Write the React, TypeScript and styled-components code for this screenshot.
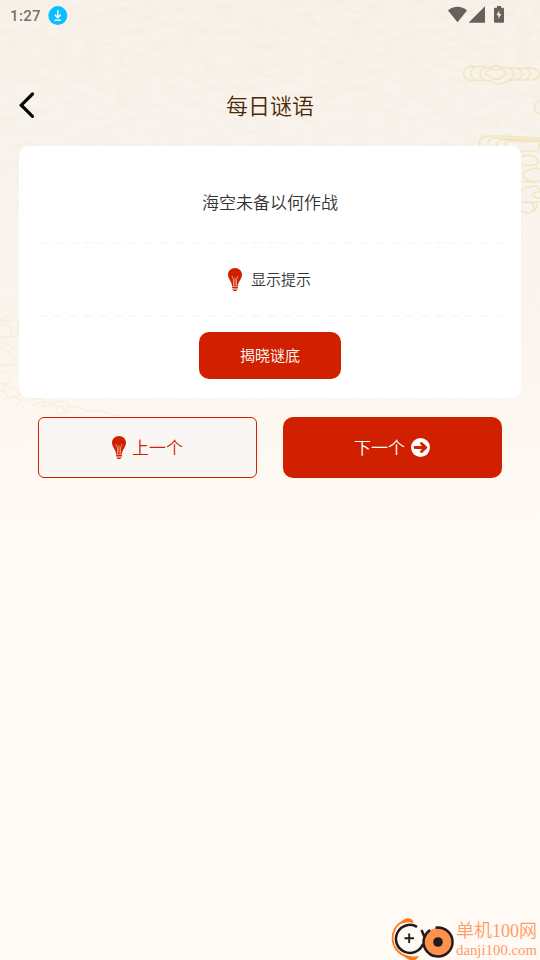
import React from 'react';
import styled, { createGlobalStyle, css } from 'styled-components';

const GlobalStyle = createGlobalStyle`
  * { box-sizing: border-box; }
  body { margin: 0; background: #fffaf3; }
`;

const Page = styled.main`
  position: relative;
  width: 540px;
  height: 960px;
  overflow: hidden;
  display: flex;
  flex-direction: column;
  background: linear-gradient(#f8f2ea 0, #f8f4ed 180px, #faf6ef 340px, #fdf8f1 440px, #fffaf3 530px);
  font-family: 'Noto Sans CJK SC', sans-serif;
  font-weight: 350;
`;

const Backdrop = styled.svg`
  position: absolute;
  inset: 0;
  pointer-events: none;
`;

const StatusBar = styled.div`
  position: relative;
  height: 32px;
  padding: 0 35px 0 10px;
  display: flex;
  align-items: center;
  justify-content: space-between;
`;

const StatusGroup = styled.div`
  display: flex;
  align-items: center;
`;

const Clock = styled.span`
  width: 38px;
  font: 500 15px/32px Roboto, sans-serif;
  letter-spacing: 0.35px;
  color: #75726e;
`;

const Header = styled.header`
  position: relative;
  height: 114px;
  padding: 48px 18px 0;
  display: grid;
  grid-template-columns: 20px 1fr 20px;
  align-items: start;
`;

const BackButton = styled.button`
  width: 20px;
  height: 50px;
  padding: 0;
  border: 0;
  background: none;
  display: flex;
  align-items: center;
`;

const Title = styled.h1`
  margin: 0;
  text-align: center;
  font-size: 22px;
  line-height: 49px;
  font-weight: 350;
  color: #4a2a05;
`;

const Card = styled.section`
  position: relative;
  height: 252px;
  margin: 0 19px;
  padding: 0 19px;
  border-radius: 10px;
  background: #fff;
  display: flex;
  flex-direction: column;
`;

const Riddle = styled.p`
  height: 96px;
  margin: 0;
  padding-top: 43px;
  text-align: center;
  font-size: 17px;
  line-height: 26px;
  color: #333;
`;

const Divider = styled.div`
  height: 2px;
  flex: none;
  background: repeating-linear-gradient(90deg, #f9f9f9 0 8px, transparent 8px 15.3px);
`;

const Hint = styled.button`
  height: 71px;
  border: 0;
  padding: 0 2px 0 0;
  background: none;
  display: flex;
  align-items: center;
  justify-content: center;
  gap: 8px;
  font: 350 15px/24px 'Noto Sans CJK SC', sans-serif;
  color: #333;
`;

const Reveal = styled.button`
  width: 142px;
  height: 47px;
  margin: 15px auto 0;
  border: 0;
  padding: 0 0 2px;
  border-radius: 10px;
  background: #d02000;
  color: #fff;
  font: 350 15px/24px 'Noto Sans CJK SC', sans-serif;
`;

const Label = styled.span`
  padding-bottom: 2px;
`;

const Pager = styled.nav`
  position: relative;
  margin: 19px 38px 0;
  display: grid;
  grid-template-columns: 219px 219px;
  justify-content: space-between;
`;

const PagerButton = styled.button<{ $filled?: boolean }>`
  height: 61px;
  padding: 0 1px 0 0;
  display: flex;
  align-items: center;
  justify-content: center;
  gap: ${({ $filled }) => ($filled ? 6 : 5)}px;
  font: 350 17px/26px 'Noto Sans CJK SC', sans-serif;
  ${({ $filled }) =>
    $filled
      ? css`
          border: 0;
          border-radius: 10px;
          background: #d02000;
          color: #fff;
        `
      : css`
          border: 1px solid #d02000;
          border-radius: 6px;
          background: #faf6f4;
          color: #d02000;
        `}
`;

const Watermark = styled.footer`
  position: relative;
  margin: auto 0 0 auto;
  width: 150px;
  height: 44px;
  display: flex;
`;

const SiteText = styled.div`
  width: 84px;
  padding-top: 5px;
  color: #ff9b68;
  white-space: nowrap;
`;

const SiteName = styled.div`
  height: 21px;
  font: 350 18px/21px 'Liberation Serif', 'Noto Sans CJK SC', serif;
`;

const SiteUrl = styled.div`
  font: 400 14.8px/16px 'Liberation Serif', serif;
`;

const Bulb = () => (
  <svg width="16" height="24" viewBox="0 0 16 24">
    <path d="M8 0C3.900 0 1 3 1 6.800c0 4 3.700 6.500 4.200 11.600h5.600C11.300 13.300 15 10.800 15 6.800 15 3 12.100 0 8 0Z" fill="#d02000" />
    <path d="M5 8c.1 1.800 1.300 1.800 1.500 4v5.700M11 8c-.1 1.800-1.300 1.800-1.500 4v5.700M8 9.500v8.200" fill="none" stroke="#fbd8d0" strokeWidth=".65" />
    <path d="M5.500 19.500h5M5.700 21h4.600M6.700 22.500h2.600" stroke="#d02000" strokeWidth="1" strokeLinecap="round" />
  </svg>
);

const DownloadBadge = () => (
  <svg width="20" height="20" viewBox="0 0 20 20">
    <circle cx="9.800" cy="9.600" r="9.500" fill="#08c0ff" />
    <path d="M9.800 4.300v7M6.800 8.700l3 3 3-3M6.600 14.300h6.400" fill="none" stroke="#fff" strokeWidth="1.500" />
  </svg>
);

const StatusIcons = () => (
  <svg width="58" height="20" viewBox="447 6 58 20" fill="#65625e">
    <path d="M448 10.500c5.200-5 13.800-5 19 0L457.500 22.300Z" />
    <path d="M485 6.300v16.400h-16.500Z" />
    <path d="M497 6h4v1.800h1.700c.8 0 1.300.5 1.300 1.300v12.400c0 .8-.5 1.300-1.300 1.300h-7.400c-.8 0-1.300-.5-1.300-1.300V9.100c0-.8.5-1.300 1.300-1.300h1.700Z" />
    <path d="M499.300 10.500l-2.900 4.800h2v3.800l2.900-5h-2Z" fill="#f5f0e9" />
  </svg>
);

const NextIcon = () => (
  <svg width="19" height="19" viewBox="0 0 19 19">
    <circle cx="9.500" cy="9.500" r="9.500" fill="#fff" />
    <path d="M4 9.500h10M10.500 5.500l4.300 4-4.300 4" fill="none" stroke="#d02000" strokeWidth="2.800" strokeLinecap="round" strokeLinejoin="round" />
  </svg>
);

const SiteLogo = () => (
  <svg width="66" height="44" viewBox="390 916 66 44" fill="none">
    <path d="M403 921.500c-15 7-14 30 4 35" stroke="#ff7a1a" strokeWidth="1.800" />
    <path d="M399 924c3-4 8-7 12-5 2 1 3 3 2 4-5-2-9 0-14 1ZM402 954c6 2 11 3 17 2-2 4-6 5-9 4-3-1-6-3-8-6Z" fill="#ff7a1a" />
    <path d="M417 926.800A14 14 0 1 0 423 944" stroke="#211b20" strokeWidth="2.500" />
    <path d="M404.500 938.200h9.500M409.200 933.500v9.500" stroke="#211b20" strokeWidth="1.900" />
    <circle cx="438" cy="942" r="14" fill="#ff924b" />
    <path d="M435.500 927.700a14.500 14.500 0 1 1-11.400 10.300c1-3.300 3-6 6-8M421.500 930l3 7" stroke="#211b20" strokeWidth="2.500" />
    <circle cx="438" cy="942" r="4.800" fill="#211b20" />
  </svg>
);

const PaperBackdrop = () => (
  <Backdrop width="540" height="960" viewBox="0 0 540 960" fill="none">
    <defs>
      <filter id="paper" x="0" y="0" width="100%" height="100%">
        <feTurbulence type="fractalNoise" baseFrequency=".06 .14" numOctaves="3" seed="8" />
        <feColorMatrix values="0 0 0 0 .75  0 0 0 0 .6  0 0 0 0 .42  .2 0 0 0 -.075" />
      </filter>
      <linearGradient id="fade" x1="0" y1="0" x2="0" y2="1">
        <stop offset="0" stopColor="#fff" />
        <stop offset="1" stopColor="#000" />
      </linearGradient>
      <mask id="paperFade"><rect width="540" height="520" fill="url(#fade)" /></mask>
    </defs>
    <g mask="url(#paperFade)"><rect width="540" height="520" filter="url(#paper)" /></g>
    <g stroke="#efe2b4" strokeWidth="1.500" opacity=".75">
      <path d="M485 80.500h-14c-10 0-10-14 0-14h15M479 80.500c-10 0-11-14-1-14" />
      <path d="M489 80.500c-11 0-12-11-2-12.500 5 0 6-2 9-2s4 2 9 2h26c11 0 11 12 0 12h-18c-6 0-9 4-15 4-4 0-6-3-9-3.500Z" />
      <path d="M496 70c6-2 10 1 10 4 0 2-5 2-6 5h-7c-1-3-7-3-7-5 0-4 5-6 10-4ZM506 68c11 0 11 12 0 12M514 68c11 0 11 12 0 12M522 68c11 0 11 12 0 12" />
      <path d="M542 100c-10 2-10 12 0 15M479.500 146v-5c0-4 3-5 9-5h17l35 2M488 146c0-6 2-8 8-8l44 2M497 146c0-5 3-7 9-6l34 1M505 146c0-3 2-5 6-5l29 1" />
      <path d="M521 151h14c5 0 3-4 5-8M521 157c6-3 14-2 17 3s-10 7-17 4M540 169c-5-3-7 1-12 1-6 2-6 8 0 10 6 0 7 3 12 1M521 182c7-1 12 2 19-1M540 190c-6-9-11 0-14-3l-5 4M540 192c-9-1-9 7 0 6M521 202h19M525 203c12-3 12 10 1 10l-5-2M536 203c2 4 0 7-4 9" />
    </g>
    <g stroke="#f3eacb" strokeWidth="1.200" opacity=".6">
      <path d="M0 257c4 0 7-5 13 1M0 305c12 1 10 16 0 14M0 322c5-4 8 2 13-2l6 2M0 324c14-1 16 15 3 14M19 325c-3 3 1 5-2 10-4 3-10 0-17 3M0 342c8 0 13 6 19 11M0 349c7 0 12 4 16 10M0 366c7-3 13-1 19-1M0 372c12 0 14 10 5 13-3 2-3 5 0 8" />
      <path d="M0 383c6 0 9 3 10 7 5-4 12 0 9 5 8-1 11 1 12 6 5-6 18-1 12 6 11-4 23 0 25 6M32 406c6-5 14-5 20-2 10-8 24 2 15 8-9 5-15-4-7-6M65 407c15-3 17 5 28 4 12-2 14 4 26 5M8 399c8-7 18 3 8 6M0 391c8-1 11 10 0 9" />
    </g>
  </Backdrop>
);

export default function App() {
  return (
    <>
      <GlobalStyle />
      <Page>
        <PaperBackdrop />
        <StatusBar>
          <StatusGroup><Clock>1:27</Clock><DownloadBadge /></StatusGroup>
          <StatusIcons />
        </StatusBar>
        <Header>
          <BackButton aria-label="返回">
            <svg width="18" height="28" viewBox="0 0 18 28"><path d="M14.500 3 3.300 14.200 14.500 25.400" fill="none" stroke="#050505" strokeWidth="3.200" strokeLinecap="round" /></svg>
          </BackButton>
          <Title>每日谜语</Title>
        </Header>
        <Card>
          <Riddle>海空未备以何作战</Riddle>
          <Divider />
          <Hint><Bulb /><Label>显示提示</Label></Hint>
          <Divider />
          <Reveal>揭晓谜底</Reveal>
        </Card>
        <Pager>
          <PagerButton><Bulb /><Label>上一个</Label></PagerButton>
          <PagerButton $filled><Label>下一个</Label><NextIcon /></PagerButton>
        </Pager>
        <Watermark>
          <SiteLogo />
          <SiteText>
            <SiteName>单机100网</SiteName>
            <SiteUrl>danji100.com</SiteUrl>
          </SiteText>
        </Watermark>
      </Page>
    </>
  );
}
